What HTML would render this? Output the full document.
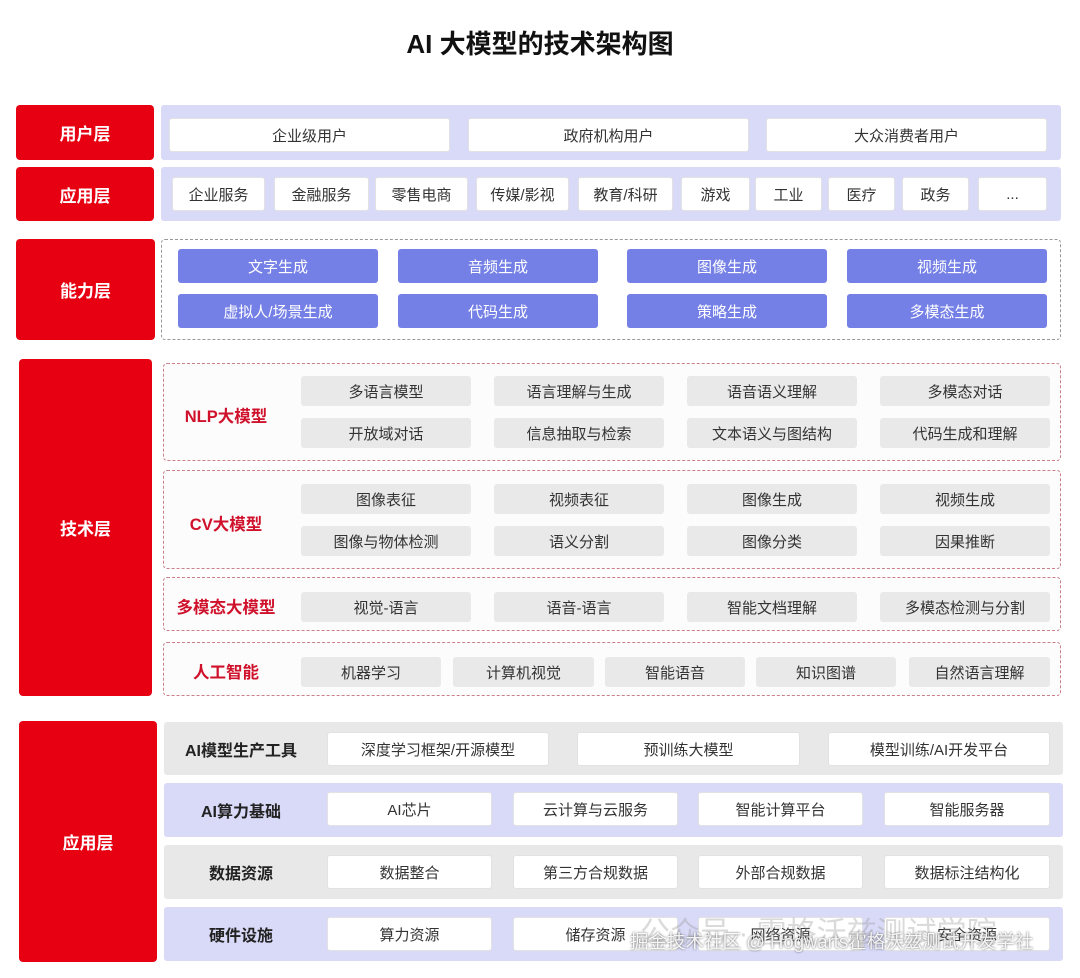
<!DOCTYPE html>
<html><head><meta charset="utf-8">
<style>
*{margin:0;padding:0;box-sizing:border-box}
body{width:1080px;height:978px;background:#fff;position:relative;overflow:hidden;font-family:"Liberation Sans","Noto Sans CJK SC",sans-serif;color:#333}
div{position:absolute}
.c{display:flex;align-items:center;justify-content:center;white-space:nowrap}
.r{background:#e60012;color:#fff;font-weight:bold;font-size:17px;border-radius:4px}
.lv{background:#d9daf8;border-radius:3px}
.gy{background:#e8e8e8;border-radius:3px}
.w{background:#fff;border:1px solid #e2e2e2;border-radius:3px;font-size:15px;color:#333}
.p{background:#7580e6;color:#fff;font-size:15px;border-radius:3px}
.g{background:#e9e9e9;font-size:15px;color:#333;border-radius:3px}
.dg{border:1.2px dashed #999;border-radius:4px}
.dr{border:1.2px dashed #c98088;border-radius:4px;background:#fcfcfc}
.lr{color:#d0112b;font-weight:bold;font-size:16.5px}
.lb{color:#222;font-weight:bold;font-size:16px}
</style></head><body>
<div class="c" style="left:0;top:22px;width:1080px;height:40px;font-size:26px;font-weight:bold;color:#111">AI 大模型的技术架构图</div>

<div class="c r" style="left:16px;top:105px;width:138px;height:55px">用户层</div>
<div class="lv" style="left:161px;top:105px;width:900px;height:55px"></div>
<div class="c w" style="left:169px;top:118px;width:281px;height:34px">企业级用户</div>
<div class="c w" style="left:468px;top:118px;width:281px;height:34px">政府机构用户</div>
<div class="c w" style="left:766px;top:118px;width:281px;height:34px">大众消费者用户</div>

<div class="c r" style="left:16px;top:167px;width:138px;height:54px">应用层</div>
<div class="lv" style="left:161px;top:167px;width:900px;height:54px"></div>
<div class="c w" style="left:172px;top:177px;width:93px;height:34px">企业服务</div>
<div class="c w" style="left:274px;top:177px;width:95px;height:34px">金融服务</div>
<div class="c w" style="left:375px;top:177px;width:93px;height:34px">零售电商</div>
<div class="c w" style="left:476px;top:177px;width:93px;height:34px">传媒/影视</div>
<div class="c w" style="left:578px;top:177px;width:95px;height:34px">教育/科研</div>
<div class="c w" style="left:681px;top:177px;width:69px;height:34px">游戏</div>
<div class="c w" style="left:755px;top:177px;width:67px;height:34px">工业</div>
<div class="c w" style="left:828px;top:177px;width:67px;height:34px">医疗</div>
<div class="c w" style="left:902px;top:177px;width:67px;height:34px">政务</div>
<div class="c w" style="left:978px;top:177px;width:69px;height:34px">...</div>

<div class="c r" style="left:16px;top:239px;width:139px;height:101px">能力层</div>
<div class="dg" style="left:161px;top:239px;width:900px;height:101px"></div>
<div class="c p" style="left:178px;top:249px;width:200px;height:34px">文字生成</div>
<div class="c p" style="left:398px;top:249px;width:200px;height:34px">音频生成</div>
<div class="c p" style="left:627px;top:249px;width:200px;height:34px">图像生成</div>
<div class="c p" style="left:847px;top:249px;width:200px;height:34px">视频生成</div>
<div class="c p" style="left:178px;top:294px;width:200px;height:34px">虚拟人/场景生成</div>
<div class="c p" style="left:398px;top:294px;width:200px;height:34px">代码生成</div>
<div class="c p" style="left:627px;top:294px;width:200px;height:34px">策略生成</div>
<div class="c p" style="left:847px;top:294px;width:200px;height:34px">多模态生成</div>

<div class="c r" style="left:19px;top:359px;width:133px;height:337px">技术层</div>
<div class="dr" style="left:163px;top:363px;width:898px;height:98px"></div>
<div class="dr" style="left:163px;top:470px;width:898px;height:99px"></div>
<div class="dr" style="left:163px;top:577px;width:898px;height:54px"></div>
<div class="dr" style="left:163px;top:642px;width:898px;height:54px"></div>
<div class="c lr" style="left:170px;top:403px;width:112px;height:24px">NLP大模型</div>
<div class="c lr" style="left:170px;top:511px;width:112px;height:24px">CV大模型</div>
<div class="c lr" style="left:170px;top:594px;width:112px;height:24px">多模态大模型</div>
<div class="c lr" style="left:170px;top:659px;width:112px;height:24px">人工智能</div>

<div class="c g" style="left:301px;top:376px;width:170px;height:30px">多语言模型</div>
<div class="c g" style="left:494px;top:376px;width:170px;height:30px">语言理解与生成</div>
<div class="c g" style="left:687px;top:376px;width:170px;height:30px">语音语义理解</div>
<div class="c g" style="left:880px;top:376px;width:170px;height:30px">多模态对话</div>
<div class="c g" style="left:301px;top:418px;width:170px;height:30px">开放域对话</div>
<div class="c g" style="left:494px;top:418px;width:170px;height:30px">信息抽取与检索</div>
<div class="c g" style="left:687px;top:418px;width:170px;height:30px">文本语义与图结构</div>
<div class="c g" style="left:880px;top:418px;width:170px;height:30px">代码生成和理解</div>

<div class="c g" style="left:301px;top:484px;width:170px;height:30px">图像表征</div>
<div class="c g" style="left:494px;top:484px;width:170px;height:30px">视频表征</div>
<div class="c g" style="left:687px;top:484px;width:170px;height:30px">图像生成</div>
<div class="c g" style="left:880px;top:484px;width:170px;height:30px">视频生成</div>
<div class="c g" style="left:301px;top:526px;width:170px;height:30px">图像与物体检测</div>
<div class="c g" style="left:494px;top:526px;width:170px;height:30px">语义分割</div>
<div class="c g" style="left:687px;top:526px;width:170px;height:30px">图像分类</div>
<div class="c g" style="left:880px;top:526px;width:170px;height:30px">因果推断</div>

<div class="c g" style="left:301px;top:592px;width:170px;height:30px">视觉-语言</div>
<div class="c g" style="left:494px;top:592px;width:170px;height:30px">语音-语言</div>
<div class="c g" style="left:687px;top:592px;width:170px;height:30px">智能文档理解</div>
<div class="c g" style="left:880px;top:592px;width:170px;height:30px">多模态检测与分割</div>

<div class="c g" style="left:301px;top:657px;width:140px;height:30px">机器学习</div>
<div class="c g" style="left:453px;top:657px;width:141px;height:30px">计算机视觉</div>
<div class="c g" style="left:605px;top:657px;width:140px;height:30px">智能语音</div>
<div class="c g" style="left:756px;top:657px;width:140px;height:30px">知识图谱</div>
<div class="c g" style="left:909px;top:657px;width:141px;height:30px">自然语言理解</div>

<div class="c r" style="left:19px;top:721px;width:138px;height:241px">应用层</div>
<div class="gy" style="left:164px;top:722px;width:899px;height:53px"></div>
<div class="lv" style="left:164px;top:783px;width:899px;height:54px"></div>
<div class="gy" style="left:164px;top:845px;width:899px;height:54px"></div>
<div class="lv" style="left:164px;top:907px;width:899px;height:54px"></div>
<div class="c lb" style="left:170px;top:737px;width:142px;height:24px">AI模型生产工具</div>
<div class="c lb" style="left:170px;top:798px;width:142px;height:24px">AI算力基础</div>
<div class="c lb" style="left:170px;top:860px;width:142px;height:24px">数据资源</div>
<div class="c lb" style="left:170px;top:922px;width:142px;height:24px">硬件设施</div>

<div class="c w" style="left:327px;top:732px;width:222px;height:34px">深度学习框架/开源模型</div>
<div class="c w" style="left:577px;top:732px;width:223px;height:34px">预训练大模型</div>
<div class="c w" style="left:828px;top:732px;width:222px;height:34px">模型训练/AI开发平台</div>

<div class="c w" style="left:327px;top:792px;width:165px;height:34px">AI芯片</div>
<div class="c w" style="left:513px;top:792px;width:165px;height:34px">云计算与云服务</div>
<div class="c w" style="left:698px;top:792px;width:165px;height:34px">智能计算平台</div>
<div class="c w" style="left:884px;top:792px;width:166px;height:34px">智能服务器</div>

<div class="c w" style="left:327px;top:855px;width:165px;height:34px">数据整合</div>
<div class="c w" style="left:513px;top:855px;width:165px;height:34px">第三方合规数据</div>
<div class="c w" style="left:698px;top:855px;width:165px;height:34px">外部合规数据</div>
<div class="c w" style="left:884px;top:855px;width:166px;height:34px">数据标注结构化</div>

<div class="c w" style="left:327px;top:917px;width:165px;height:34px">算力资源</div>
<div class="c w" style="left:513px;top:917px;width:165px;height:34px">储存资源</div>
<div class="c w" style="left:698px;top:917px;width:165px;height:34px">网络资源</div>
<div class="c w" style="left:884px;top:917px;width:166px;height:34px">安全资源</div>

<div style="left:640px;top:908px;font-size:30px;color:rgba(150,150,150,0.35);white-space:nowrap">公众号 · 霍格沃兹测试学院</div>
<div style="left:630px;top:928px;font-size:18.5px;color:rgba(255,255,255,0.9);white-space:nowrap;text-shadow:0 0 2px #555">掘金技术社区 @ Hogwarts霍格沃兹测试开发学社</div>
</body></html>
